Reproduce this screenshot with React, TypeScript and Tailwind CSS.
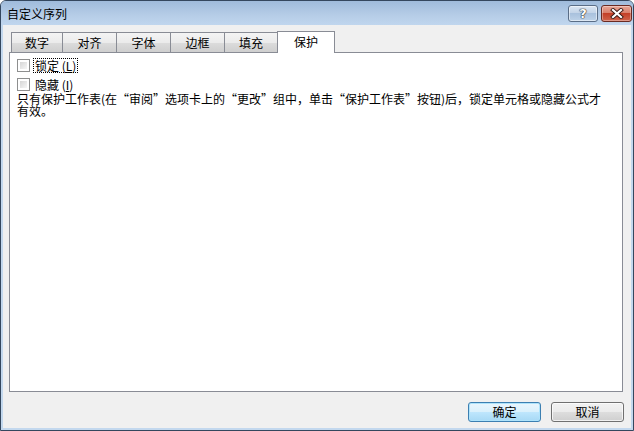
import React from "react";

const tabs = ["数字", "对齐", "字体", "边框", "填充"];

function CheckBox() {
  return (
    <div className="w-[13px] h-[13px] border border-[#8e8f8f] bg-white p-[2px] shrink-0">
      <div className="w-full h-full bg-[linear-gradient(135deg,#d6d6d6,#f6f6f6)]" />
    </div>
  );
}

export default function App() {
  return (
    <div className="w-[634px] h-[431px] bg-[#c3d8ee] border border-[#34475e] rounded-t-[6px] flex flex-col overflow-hidden text-[12px] text-black font-['Noto_Sans_CJK_SC',sans-serif]">
      {/* title bar */}
      <div className="h-[24px] shrink-0 flex items-center pl-[6px] pr-[1px] bg-[linear-gradient(#9fbbdb,#b6cde7_60%,#c0d6ee)]">
        <span className="leading-[14px] pt-[1px]">自定义序列</span>
        <div className="ml-auto flex gap-[3px] pt-[1px]">
          <div className="w-[30px] h-[17px] rounded-[3px] border border-[#5a6d86] bg-[linear-gradient(#dbe6f2,#c3d4e8_45%,#a9c1dd_50%,#bdd2e8)] flex items-center justify-center shadow-[inset_0_0_0_1px_rgba(255,255,255,0.5)]">
            <span className="text-white font-bold text-[13px] leading-[13px] font-['DejaVu_Sans',sans-serif] [text-shadow:0_0_1px_#222,0_0_1px_#222,0_0_1px_#222]">?</span>
          </div>
          <div className="w-[31px] h-[17px] rounded-[3px] border border-[#6a2a22] bg-[linear-gradient(#e8a797,#d9806c_45%,#c43f27_50%,#d0644c)] flex items-center justify-center shadow-[inset_0_0_0_1px_rgba(255,255,255,0.35)]">
            <svg width="14" height="11" viewBox="0 0 14 11">
              <path d="M3 2 L11 9 M11 2 L3 9" stroke="#3a1a16" strokeWidth="4" strokeLinecap="square" />
              <path d="M3 2 L11 9 M11 2 L3 9" stroke="#ffffff" strokeWidth="2.2" strokeLinecap="square" />
            </svg>
          </div>
        </div>
      </div>

      {/* body */}
      <div className="flex-1 mx-[2px] mb-[2px] bg-[#f0f0f0] flex flex-col pt-[6px]">
        <div className="flex items-end h-[22px] pl-[8px] relative z-10 -mb-px">
          {tabs.map((t, i) => (
            <div
              key={t}
              className={
                (i === 0 ? "w-[52px] border-l " : i === 4 ? "w-[53px] " : "w-[54px] ") +
                "h-[20px] mb-px border-t border-r border-[#898c95] bg-[linear-gradient(#f4f4f4,#ebebeb_50%,#dcdcdc_51%,#cfcfcf)] flex items-center justify-center leading-[14px]"
              }>
              {t}
            </div>
          ))}
          <div className="w-[58px] -ml-px h-[22px] border-l border-t border-r border-[#898c95] bg-white flex items-center justify-center leading-[14px] pb-[1px]">
            保护
          </div>
        </div>

        <div className="ml-[6px] w-[614px] h-[340px] border border-[#898c95] bg-white pl-[7px] pt-[5px]">
          <div className="flex items-center h-[15px]">
            <CheckBox />
            <span className="ml-[3px] px-[1px] border border-dotted border-black leading-[13px]">
              锁定 (<span className="underline">L</span>)
            </span>
          </div>
          <div className="flex items-center h-[15px] mt-[4px]">
            <CheckBox />
            <span className="ml-[3px] px-[1px] border border-transparent leading-[13px]">
              隐藏 (<span className="underline">I</span>)
            </span>
          </div>
          <p className="mt-[1px] leading-[12px] whitespace-nowrap">
            只有保护工作表(在“审阅”选项卡上的“更改”组中，单击“保护工作表”按钮)后，锁定单元格或隐藏公式才
            <br />
            有效。
          </p>
        </div>

        <div className="flex justify-end gap-[10px] pr-[7px] mt-[10px]">
          <button className="w-[73px] h-[20px] rounded-[3px] border border-[#3c7fb1] bg-[linear-gradient(#eaf6fd,#d9f0fc_50%,#bee6fd_51%,#a7d9f5)] shadow-[inset_0_0_0_1px_#aee3fb] leading-[14px]">
            确定
          </button>
          <button className="w-[73px] h-[20px] rounded-[3px] border border-[#707070] bg-[linear-gradient(#f2f2f2,#ebebeb_50%,#dddddd_51%,#cfcfcf)] shadow-[inset_0_0_0_1px_rgba(255,255,255,0.7)] leading-[14px]">
            取消
          </button>
        </div>
      </div>
    </div>
  );
}
